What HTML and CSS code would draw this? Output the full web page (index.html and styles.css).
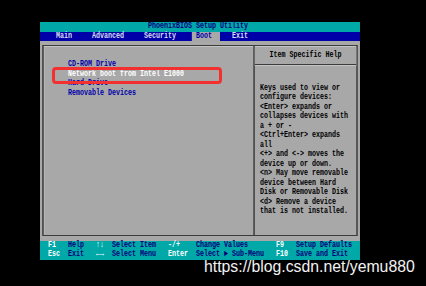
FILE: index.html
```html
<!DOCTYPE html>
<html lang="en">
  <head>
    <meta charset="UTF-8" />
    <meta name="viewport" content="width=device-width, initial-scale=1.0" />
    <title>PhoenixBIOS Setup Utility</title>
    <link rel="stylesheet" href="styles.css">
  </head>
  <body>
    <div class="shot">
      <div class="screen">
        <div class="title">PhoenixBIOS Setup Utility</div>

        <div class="menu">
          <span class="tab">Main</span>
          <span class="tab">Advanced</span>
          <span class="tab">Security</span>
          <span class="tab active">Boot</span>
          <span class="tab exit">Exit</span>
        </div>

        <div class="main">
          <div class="frame">
            <div class="list">
              <div class="item">CD-ROM Drive</div>
              <div class="item selected">Network boot from Intel E1000</div>
              <div class="item">Hard Drive</div>
              <div class="item">Removable Devices</div>
            </div>

            <div class="help">
              <div class="help-title">Item Specific Help</div>
              <div class="help-text">
                Keys used to view or<br>
                configure devices:<br>
                &lt;Enter&gt; expands or<br>
                collapses devices with<br>
                a + or -<br>
                &lt;Ctrl+Enter&gt; expands<br>
                all<br>
                &lt;+&gt; and &lt;-&gt; moves the<br>
                device up or down.<br>
                &lt;n&gt; May move removable<br>
                device between Hard<br>
                Disk or Removable Disk<br>
                &lt;d&gt; Remove a device<br>
                that is not installed.
              </div>
            </div>
          </div>
        </div>

        <div class="keys">
          <span class="key">F1</span>
          <span class="desc">Help</span>
          <span class="key">↑↓</span>
          <span class="desc">Select Item</span>
          <span class="key">-/+</span>
          <span class="desc">Change Values</span>
          <span class="key">F9</span>
          <span class="desc">Setup Defaults</span>

          <span class="key">Esc</span>
          <span class="desc">Exit</span>
          <span class="key">←→</span>
          <span class="desc">Select Menu</span>
          <span class="key">Enter</span>
          <span class="desc">Select ► Sub-Menu</span>
          <span class="key">F10</span>
          <span class="desc">Save and Exit</span>
        </div>
      </div>

      <!-- annotation over the screenshot -->
      <div class="mark"></div>
      <div class="url">https://blog.csdn.net/yemu880</div>
    </div>
  </body>
</html>
```

FILE: styles.css
```css
html,
body {
  margin: 0;
  background: #000;
}
.shot {
  position: relative;
  width: 426px;
  height: 286px;
  padding: 22px 0 0 40px;
  box-sizing: border-box;
  overflow: hidden;
}

/* 80x25 text screen, squeezed to 320px wide */
.screen {
  width: 432px;
  transform: scaleX(0.7407);
  transform-origin: 0 0;
  font-family: "Liberation Mono", "DejaVu Sans Mono", monospace;
  font-weight: bold;
  font-size: 9px;
  line-height: 9.5px;
}
.title {
  height: 9.5px;
  padding-left: 27ch;
  background: #00a8a8;
  color: #000080;
}
.menu {
  display: flex;
  height: 9.5px;
  padding-left: 3ch;
  background: #0000a8;
  color: #dcdcf4;
}
.tab {
  padding: 0 1ch;
  margin-right: 3ch;
}
.tab.active {
  padding-right: 2ch;
  margin-right: 2ch;
  background: #a8a8a8;
  color: #0000a8;
}

.main {
  height: 199.5px;
  padding: 4px 3px 5px 3px;
  box-sizing: border-box;
  background: #a8a8a8;
}
.frame {
  display: flex;
  height: 100%;
  box-sizing: border-box;
  border: 1px solid #3c3c3c;
  border-left-width: 2px;
  border-right-width: 2px;
  box-shadow: inset 1px 1px 0 #c4c4c4;
}
.list {
  width: 283px;
  padding: 14px 0 0 32.8px;
  box-sizing: border-box;
  color: #0000a8;
}
.item {
  height: 9.5px;
}
.item.selected {
  color: #fff;
}
.help {
  flex: 1;
  border-left: 2px solid #3c3c3c;
  color: #000;
}
.help-title {
  height: 9.5px;
  padding: 4.5px 0 4.25px;
  margin-bottom: 4.5px;
  text-align: center;
  border-bottom: 1px solid #3c3c3c;
  box-shadow: 0 1px 0 #c4c4c4;
}
.help-text {
  padding: 13.75px 0 0 7px;
}

.keys {
  display: grid;
  grid-template-columns: 5ch 7ch 4ch 14ch 7ch 20ch 5ch 1fr;
  height: 19px;
  padding-left: 2ch;
  background: #00a8a8;
}
.key {
  color: #fff;
}
.desc {
  color: #00007a;
}

.mark {
  position: absolute;
  left: 52px;
  top: 67px;
  width: 170px;
  height: 17px;
  box-sizing: border-box;
  border: 3px solid #f23030;
  border-radius: 4px;
}
.url {
  position: absolute;
  left: 204px;
  top: 258px;
  font-family: "Liberation Sans", Arial, sans-serif;
  font-size: 15.8px;
  line-height: 18px;
  color: #f2f2f2;
}
```
